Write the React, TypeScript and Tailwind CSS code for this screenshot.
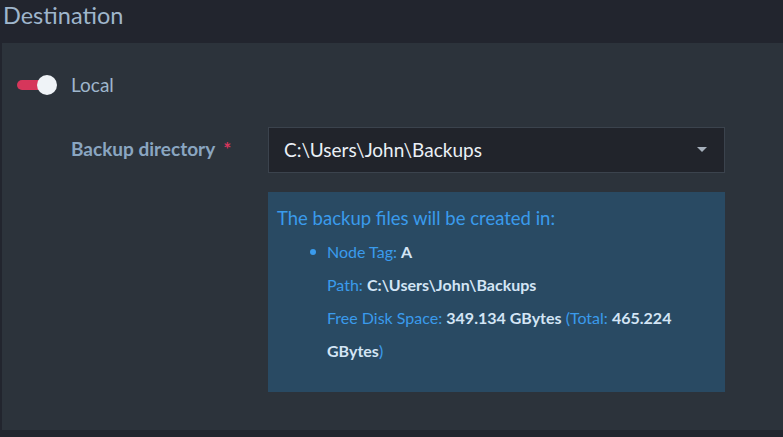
import React from "react";

export default function App() {
  const font = { fontFamily: "Lato, 'Noto Sans', sans-serif" };
  return (
    <div className="w-[783px] h-[437px] bg-[#22252e] overflow-hidden" style={font}>
      <div className="h-[43px] pl-[3px] text-[23.5px] leading-[30px] text-[#9fb6cc]">Destination</div>
      <div className="ml-[2px] h-[387px] bg-[#2c333b] pt-[30px]">
        <div className="flex items-center h-[24px] pl-[15px]">
          <div className="relative w-[42px] h-[22px] flex items-center">
            <div className="w-[26px] h-[10px] rounded-full bg-[#d6365b]" />
            <div className="absolute left-[20px] top-[1px] w-[20px] h-[20px] rounded-full bg-[#eff3f7]" />
          </div>
          <span className="ml-[12px] text-[19px] text-[#9fb6cc]">Local</span>
        </div>
        <div className="flex mt-[30px]">
          <div className="w-[266px] pl-[69px] pt-[10px] text-[19px] font-bold text-[#8aa6c1] leading-[24px]">
            Backup directory <span className="ml-[4px] text-[#d6365b]">*</span>
          </div>
          <div className="w-[457px]">
            <div className="h-[46px] bg-[#21242b] border border-[#3b434d] flex items-center justify-between pl-[15px] pr-[17px]">
              <span className="text-[19px] text-[#eaf0f6]">C:\Users\John\Backups</span>
              <svg width="10" height="6" viewBox="0 0 10 6"><path d="M0 0 L10 0 L5 5 Z" fill="#a6b0bc" /></svg>
            </div>
            <div className="mt-[19px] h-[200px] bg-[#294a63] pl-[9px] pt-[13px]">
              <div className="text-[18.5px] leading-[26px] text-[#3a9bec]">The backup files will be created in:</div>
              <ul className="mt-[4px] pl-[50px] pr-[40px] text-[16px] leading-[33px] text-[#3a9bec]">
                <li className="relative">
                  <span className="absolute left-[-17px] top-[14px] w-[6px] h-[6px] rounded-full bg-[#3a9bec]" />
                  Node Tag: <b className="text-[#d3e5f5]">A</b>
                </li>
                <li>Path: <b className="text-[#d3e5f5]">C:\Users\John\Backups</b></li>
                <li>
                  Free Disk Space: <b className="text-[#d3e5f5]">349.134 GBytes</b> (Total: <b className="text-[#d3e5f5]">465.224 GBytes</b>)
                </li>
              </ul>
            </div>
          </div>
        </div>
      </div>
    </div>
  );
}
